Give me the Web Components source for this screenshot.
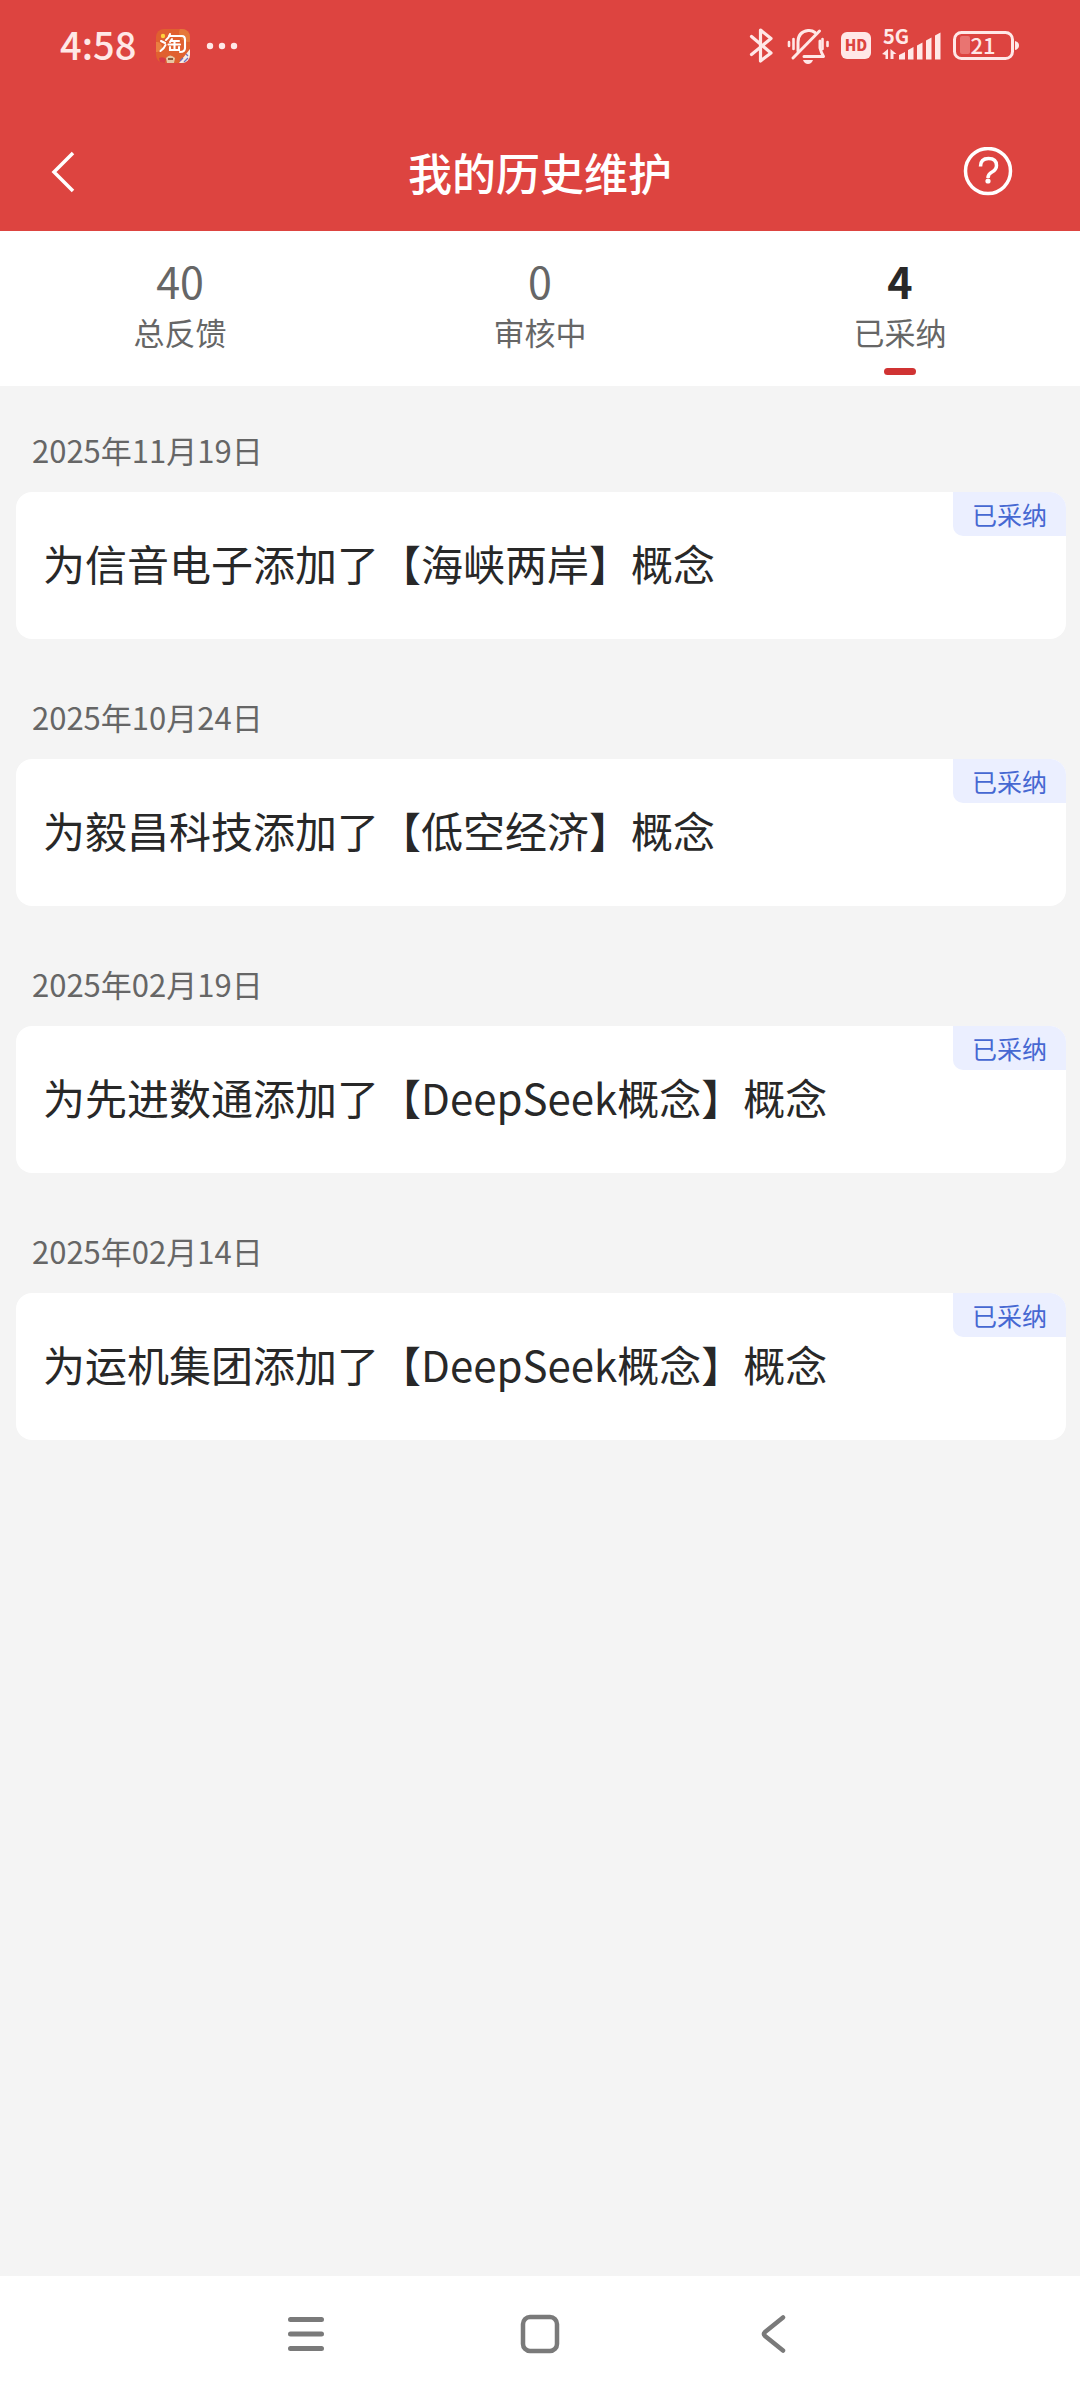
<!DOCTYPE html>
<html lang="zh-CN">
<head>
<meta charset="utf-8">
<meta name="viewport" content="width=device-width, initial-scale=1">
<title>我的历史维护</title>
<style>
  html, body { margin: 0; background: #f4f4f4; }
  body { font-family: "Noto Sans CJK SC", sans-serif; color: #282828; }
</style>
</head>
<body>
<history-page></history-page>

<script>
const define = (name, html, setup) => customElements.define(name, class extends HTMLElement {
  connectedCallback() {
    if (this.shadowRoot) return;
    this.attachShadow({ mode: "open" }).innerHTML = html;
    if (setup) setup(this, this.shadowRoot);
  }
});

define("status-bar", `
  <style>
    :host { display: flex; align-items: center; justify-content: space-between; height: 92px; padding: 0 60px; color: #ffe8e7; }
    .side { display: flex; align-items: center; }
    time { padding-bottom: 4px; font-size: 38px; line-height: 44px; font-weight: 500; }
    svg { display: block; flex: none; }
    .app { margin-left: 20px; }
    .dots { margin-left: 16px; }
    text { font-family: "Noto Sans CJK SC", sans-serif; }
  </style>
  <div class="side">
    <time>4:58</time>
    <svg class="app" width="34" height="34" viewBox="0 0 34 34" role="img" aria-label="淘宝">
      <defs><clipPath id="r"><rect width="34" height="34" rx="8"/></clipPath></defs>
      <g clip-path="url(#r)">
        <rect width="34" height="34" fill="#e0602f"/>
        <circle cx="32" cy="4" r="9" fill="#e5783a"/>
        <circle cx="1" cy="18" r="5" fill="#ea8040"/>
        <path d="M23 34L34 20v14z" fill="#f6ebe6"/>
        <path d="M3 29q4-2 7 1l-1 4H4z" fill="#d83a45"/>
        <path d="M10 29q4-5 9 0l-1 5h-7z" fill="#e6c7a4"/>
        <path d="M12 30h5" stroke="#8d5a3c" stroke-width="2"/>
        <path d="M24 32l3-3M28 33l4-4M30 25l2 2" stroke="#6f6fc0" stroke-width="1.3"/>
        <circle cx="7" cy="7" r="2.200" fill="#ffd23c"/>
        <path d="M5 12l4 2M4.500 22q4-3 5-6M14 5q-1 4-4 6M13 7h13q3 0 3 4v8q0 4-5 4M16 10l-2 3M15 12h8M12.500 15.500H24M18.500 12v8M14 18v3h9v-3" fill="none" stroke="#fff" stroke-width="2.100" stroke-linecap="round"/>
      </g>
    </svg>
    <svg class="dots" width="32" height="8" viewBox="0 0 32 8" fill="currentColor"><circle cx="4" cy="4" r="3.200"/><circle cx="16" cy="4" r="3.200"/><circle cx="28" cy="4" r="3.200"/></svg>
  </div>
  <svg width="272" height="64" viewBox="748 14 272 64" fill="none" stroke="currentColor" role="img" aria-label="手机状态">
    <path d="M751.500 36.500L771 53l-10.500 8V30L771 38.500l-19.500 16" stroke-width="3.200" stroke-linejoin="round" stroke-linecap="round"/>
    <g stroke-width="3" stroke-linecap="round">
      <path d="M798 51V42q0-10 10-11.500q4-.5 7 2M820 41v7q1 4 3.500 8.500H804" stroke-linejoin="round"/>
      <path d="M819.500 31L793 58"/>
      <path d="M789 42v4M793.500 39v10M822.500 39v10M827.500 42v4" stroke-width="2.600"/>
    </g>
    <path d="M803 60h10q-1.500 4-5 4t-5-4z" fill="currentColor" stroke="none"/>
    <rect x="841" y="32" width="30" height="27" rx="6" fill="currentColor" stroke="none"/>
    <text x="856" y="51" font-size="15" font-weight="900" text-anchor="middle" fill="#dc4440" stroke="none">HD</text>
    <text x="883" y="44" font-size="20" font-weight="700" fill="currentColor" stroke="none">5G</text>
    <g fill="currentColor" stroke="none">
      <path d="M888 49v10h-2.500v-4L882 54zM890.500 59V49l6 5h-3v5z"/>
      <path d="M899 55l6-3v7.500h-6zM908 50l5.500-3v12.500H908zM917 45.500l5.500-3v17H917zM926 40.500l5.500-3v22H926zM935 35.500l5.500-3v27H935z"/>
      <rect x="960" y="36" width="10" height="18" rx="2" fill="#e97471"/>
      <path d="M1015 41q4 1 4 4.500t-4 4.500z"/>
    </g>
    <rect x="954.500" y="32.500" width="58" height="26" rx="7" stroke-width="3"/>
    <text x="983" y="54" font-size="22" font-weight="500" text-anchor="middle" fill="currentColor" stroke="none">21</text>
  </svg>`);

define("title-bar", `
  <style>
    :host { display: flex; align-items: center; justify-content: space-between; height: 139px; padding: 20px 40px 0; box-sizing: border-box; color: #fff; }
    h1 { margin: 0; font-size: 44px; line-height: 60px; font-weight: 500; }
    button { display: flex; align-items: center; width: 64px; height: 64px; padding: 0; border: 0; background: none; color: inherit; }
    .help { justify-content: flex-end; width: 80px; }
    button svg { display: block; }
    .wrap { display: flex; flex: 1; }
    .end { justify-content: flex-end; }
  </style>
  <div class="wrap"><button aria-label="返回"><svg width="44" height="44" viewBox="0 0 44 44" fill="none" stroke="currentColor" stroke-width="3.500"><path d="M33 3L14 22l19 19"/></svg></button></div>
  <h1><slot></slot></h1>
  <div class="wrap end"><button class="help" aria-label="帮助"><svg width="80" height="50" viewBox="0 0 80 50" fill="none" stroke="currentColor" stroke-width="3.500"><circle cx="28" cy="24" r="22.500"/><path d="M20.500 19.500q0-8 8-8t8 7q0 4-4.500 6.500q-4 2-4 6" stroke-width="3.500"/><circle cx="28" cy="34" r="2.600" fill="currentColor" stroke="none"/></svg></button></div>`);

define("stat-tab", `
  <style>
    :host { display: block; flex: 1; }
    button { display: flex; flex-direction: column; align-items: center; width: 100%; height: 155px; padding: 23px 0 0; border: 0; background: none; font-family: inherit; color: #666; }
    b { font-size: 43px; line-height: 52px; font-weight: 400; }
    span { margin-top: 2px; font-size: 31px; line-height: 48px; }
    i { width: 32px; height: 7px; margin-top: 12px; border-radius: 4px; }
    :host([selected]) b { color: #282828; font-weight: 700; }
    :host([selected]) i { background: #d03333; }
  </style>
  <button role="tab"><b></b><span><slot></slot></span><i></i></button>`,
  (el, root) => {
    root.querySelector("b").textContent = el.getAttribute("count");
    root.querySelector("button").setAttribute("aria-selected", el.hasAttribute("selected"));
  });

define("history-entry", `
  <style>
    :host { display: block; }
    time { display: block; padding: 0 16px; font-size: 31px; line-height: 48px; color: #666; }
    article { position: relative; margin-top: 18px; padding: 41px 27px 46px; border-radius: 16px; background: #fff; overflow: hidden; }
    p { margin: 0; font-size: 42px; line-height: 60px; }
    .badge { position: absolute; top: 0; right: 0; padding: 0 19px; border-bottom-left-radius: 10px; background: #ebefff; color: #4668d2; font-size: 25px; line-height: 44px; }
  </style>
  <time></time>
  <article><p><slot></slot></p><span class="badge">已采纳</span></article>`,
  (el, root) => { root.querySelector("time").textContent = el.getAttribute("date"); });

define("system-nav", `
  <style>
    :host { display: flex; justify-content: center; height: 124px; background: #fff; }
    button { display: flex; align-items: center; justify-content: center; width: 234px; height: 116px; padding: 0; border: 0; background: none; color: #7a7a7a; }
  </style>
  <button aria-label="最近任务"><svg width="44" height="44" viewBox="0 0 44 44" fill="none" stroke="currentColor" stroke-width="5" stroke-linecap="round"><path d="M6.500 7.500h31M6.500 22h31M6.500 36.500h31"/></svg></button>
  <button aria-label="主屏幕"><svg width="44" height="44" viewBox="0 0 44 44" fill="none" stroke="currentColor" stroke-width="4.500"><rect x="5" y="5" width="34" height="34" rx="7"/></svg></button>
  <button aria-label="返回"><svg width="44" height="44" viewBox="0 0 44 44" fill="none" stroke="currentColor" stroke-width="4.500" stroke-linecap="round" stroke-linejoin="round"><path d="M31 5.500L13 20q-2 2 0 4l18 14.500"/></svg></button>`);

define("history-page", `
  <style>
    :host { display: flex; flex-direction: column; min-height: 100vh; }
    header { background: #dd4440; }
    nav { display: flex; background: #fff; }
    main { display: flex; flex: 1; flex-direction: column; gap: 54px; padding: 40px 14px 40px 16px; }
  </style>
  <header><status-bar></status-bar><title-bar>我的历史维护</title-bar></header>
  <nav role="tablist">
    <stat-tab count="40">总反馈</stat-tab>
    <stat-tab count="0">审核中</stat-tab>
    <stat-tab count="4" selected>已采纳</stat-tab>
  </nav>
  <main>
    <history-entry date="2025年11月19日">为信音电子添加了【海峡两岸】概念</history-entry>
    <history-entry date="2025年10月24日">为毅昌科技添加了【低空经济】概念</history-entry>
    <history-entry date="2025年02月19日">为先进数通添加了【DeepSeek概念】概念</history-entry>
    <history-entry date="2025年02月14日">为运机集团添加了【DeepSeek概念】概念</history-entry>
  </main>
  <system-nav></system-nav>`);
</script>
</body>
</html>
